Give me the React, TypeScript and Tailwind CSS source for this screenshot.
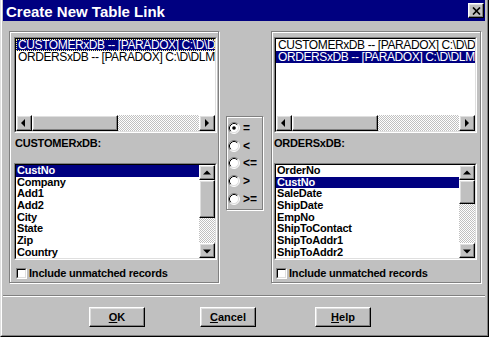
import React from "react";

const F = "font-['Liberation_Sans',Arial,sans-serif]";
const RAISED =
  "border border-t-white border-l-white border-b-black border-r-black shadow-[inset_-1px_-1px_0_#808080,inset_1px_1px_0_#dfdfdf] bg-[#c0c0c0]";
const ETCHED = "border border-[#808080] shadow-[inset_1px_1px_0_#ffffff,1px_1px_0_#ffffff]";
const CHECKER =
  "bg-[image:repeating-conic-gradient(#c0c0c0_0%_25%,#ffffff_0%_50%)] bg-[length:2px_2px]";

function Tri({ dir }: { dir: "l" | "r" | "u" | "d" }) {
  const pts =
    dir === "l"
      ? "5,0 1,4 5,8"
      : dir === "r"
      ? "2,0 6,4 2,8"
      : dir === "u"
      ? "0,5.5 4,1.5 8,5.5"
      : "0,2.5 8,2.5 4,6.5";
  return (
    <svg width="8" height="8" viewBox="0 0 8 8">
      <polygon points={pts} fill="#000" />
    </svg>
  );
}

function HScroll() {
  return (
    <div className="flex h-[16px] shrink-0">
      <div className={`${RAISED} w-[16px] flex items-center justify-center`}>
        <Tri dir="l" />
      </div>
      <div className={`${RAISED} w-[86px]`} />
      <div className={`flex-1 ${CHECKER}`} />
      <div className={`${RAISED} w-[16px] flex items-center justify-center`}>
        <Tri dir="r" />
      </div>
    </div>
  );
}

function VScroll({ thumb }: { thumb: string }) {
  return (
    <div className="flex flex-col w-[16px] shrink-0">
      <div className={`${RAISED} h-[15px] flex items-center justify-center`}>
        <Tri dir="u" />
      </div>
      <div className={`${RAISED} ${thumb}`} />
      <div className={`flex-1 ${CHECKER}`} />
      <div className={`${RAISED} h-[15px] flex items-center justify-center`}>
        <Tri dir="d" />
      </div>
    </div>
  );
}

function Sunken({ className, children }: { className: string; children: React.ReactNode }) {
  return (
    <div
      className={`${className} border border-t-[#808080] border-l-[#808080] border-b-white border-r-white`}
    >
      <div className="h-full border border-t-black border-l-black border-b-[#dfdfdf] border-r-[#dfdfdf] bg-white flex overflow-hidden">
        {children}
      </div>
    </div>
  );
}

const TABLES = [
  "CUSTOMERxDB -- [PARADOX] C:\\D\\DLM\\CUSTOMER.DB",
  "ORDERSxDB -- [PARADOX] C:\\D\\DLM\\ORDERS.DB",
];

function TopList({ sel, focus }: { sel: number; focus: boolean }) {
  return (
    <Sunken className="w-[203px] h-[96px]">
      <div className="flex flex-col w-full">
        <div className="flex-1 overflow-hidden">
          {TABLES.map((t, i) => (
            <div
              key={t}
              className={`h-[12px] leading-[12px] text-[12px] tracking-[-0.4px] whitespace-nowrap pl-[2px] ${
                i === sel ? "bg-[#000080] text-white" : "text-black"
              } ${
                i === sel && focus
                  ? "outline outline-1 outline-dotted outline-[#ffff7f] -outline-offset-1"
                  : ""
              }`}
            >
              {t}
            </div>
          ))}
        </div>
        <HScroll />
      </div>
    </Sunken>
  );
}

function FieldList({ items, sel, thumb }: { items: string[]; sel: number; thumb: string }) {
  return (
    <Sunken className="w-[203px] h-[97px]">
      <div className="flex-1 overflow-hidden">
        {items.map((t, i) => (
          <div
            key={t}
            className={`h-[11.7px] leading-[11.7px] text-[11px] font-bold tracking-[-0.2px] whitespace-nowrap pl-[1px] ${
              i === sel ? "bg-[#000080] text-white" : "text-black"
            }`}
          >
            {t}
          </div>
        ))}
      </div>
      <VScroll thumb={thumb} />
    </Sunken>
  );
}

function Check({ pl }: { pl: string }) {
  return (
    <div className={`mt-[7px] flex items-center ${pl}`}>
      <div className="w-[11px] h-[11px] border border-t-[#808080] border-l-[#808080] border-b-white border-r-white">
        <div className="h-full border border-t-black border-l-black border-b-[#dfdfdf] border-r-[#dfdfdf] bg-white" />
      </div>
      <span className="ml-[2px] text-[11px] leading-[13px] font-bold tracking-[-0.2px] text-black">
        Include unmatched records
      </span>
    </div>
  );
}

function Radio({ on }: { on: boolean }) {
  return (
    <svg width="12" height="12" viewBox="0 0 12 12">
      <circle cx="6" cy="6" r="5" fill="#fff" />
      <path d="M2.11 9.89 A5.5 5.5 0 0 1 9.89 2.11" stroke="#808080" fill="none" />
      <path d="M9.89 2.11 A5.5 5.5 0 0 1 2.11 9.89" stroke="#ffffff" fill="none" />
      <path d="M2.82 9.18 A4.5 4.5 0 0 1 9.18 2.82" stroke="#000" fill="none" />
      <path d="M9.18 2.82 A4.5 4.5 0 0 1 2.82 9.18" stroke="#dfdfdf" fill="none" />
      {on && <circle cx="6" cy="6" r="1.8" fill="#000" />}
    </svg>
  );
}

function Button({ first, rest }: { first: string; rest: string }) {
  return (
    <div
      className={`${RAISED} w-[56px] h-[20px] flex items-center justify-center text-[11px] font-bold text-black leading-none`}
    >
      <span>
        <span className="underline underline-offset-1">{first}</span>
        {rest}
      </span>
    </div>
  );
}

export default function App() {
  const ops = ["=", "<", "<=", ">", ">="];
  return (
    <div
      className={`${F} w-[489px] h-[337px] bg-[#c0c0c0] border-l border-l-[#dfdfdf] border-r border-r-black border-b border-b-black select-none`}
    >
      <div className="h-full border-l border-l-white border-r border-r-[#808080] border-b border-b-[#808080] pl-px pr-[2px] flex flex-col">
        {/* Title bar */}
        <div className="h-[21px] bg-[#000080] flex items-start justify-between shrink-0">
          <span className="pl-[3px] pt-[2px] text-white font-bold text-[15px] leading-[19px] whitespace-nowrap">
            Create New Table Link
          </span>
          <div
            className={`${RAISED} mt-[3px] mr-px w-[16px] h-[15px] flex items-center justify-center`}
          >
            <svg width="9" height="8" viewBox="0 0 9 8">
              <path d="M1 0.5 L8 7.5 M8 0.5 L1 7.5" stroke="#000" strokeWidth="1.7" />
            </svg>
          </div>
        </div>

        {/* Main */}
        <div className="flex pl-[6px] pt-[10px] shrink-0">
          {/* Left group */}
          <div className={`${ETCHED} w-[210px] h-[252px] pl-[4px] pt-[5px] flex flex-col`}>
            <TopList sel={0} focus />
            <div className="mt-[4px] h-[13px] leading-[13px] text-[11px] font-bold tracking-[-0.2px] pl-[1px] text-black">
              CUSTOMERxDB:
            </div>
            <div className="mt-[13px]">
              <FieldList
                items={["CustNo", "Company", "Add1", "Add2", "City", "State", "Zip", "Country"]}
                sel={0}
                thumb="h-[38px]"
              />
            </div>
            <Check pl="pl-[2px]" />
          </div>

          {/* Center radios */}
          <div
            className={`${ETCHED} ml-[7px] mt-[85px] w-[37px] h-[94px] pl-px pt-[2px] flex flex-col`}
          >
            {ops.map((o, i) => (
              <div key={o} className="h-[17.75px] flex items-center">
                <Radio on={i === 0} />
                <span className="ml-[3px] text-[12px] font-bold leading-none text-black">{o}</span>
              </div>
            ))}
          </div>

          {/* Right group */}
          <div className={`${ETCHED} ml-[8px] w-[210px] h-[252px] pl-[2px] pt-[5px] flex flex-col`}>
            <TopList sel={1} focus={false} />
            <div className="mt-[4px] h-[13px] leading-[13px] text-[11px] font-bold tracking-[-0.2px] text-black">
              ORDERSxDB:
            </div>
            <div className="mt-[13px]">
              <FieldList
                items={[
                  "OrderNo",
                  "CustNo",
                  "SaleDate",
                  "ShipDate",
                  "EmpNo",
                  "ShipToContact",
                  "ShipToAddr1",
                  "ShipToAddr2",
                ]}
                sel={1}
                thumb="h-[24px]"
              />
            </div>
            <Check pl="pl-[2px]" />
          </div>
        </div>

        {/* Separator */}
        <div className="mt-[12px] h-[2px] border-t border-t-[#808080] border-b border-b-white shrink-0" />

        {/* Buttons */}
        <div className="mt-[10px] flex pl-[86px]">
          <Button first="O" rest="K" />
          <div className="ml-[55px]">
            <Button first="C" rest="ancel" />
          </div>
          <div className="ml-[59px]">
            <Button first="H" rest="elp" />
          </div>
        </div>
      </div>
    </div>
  );
}
